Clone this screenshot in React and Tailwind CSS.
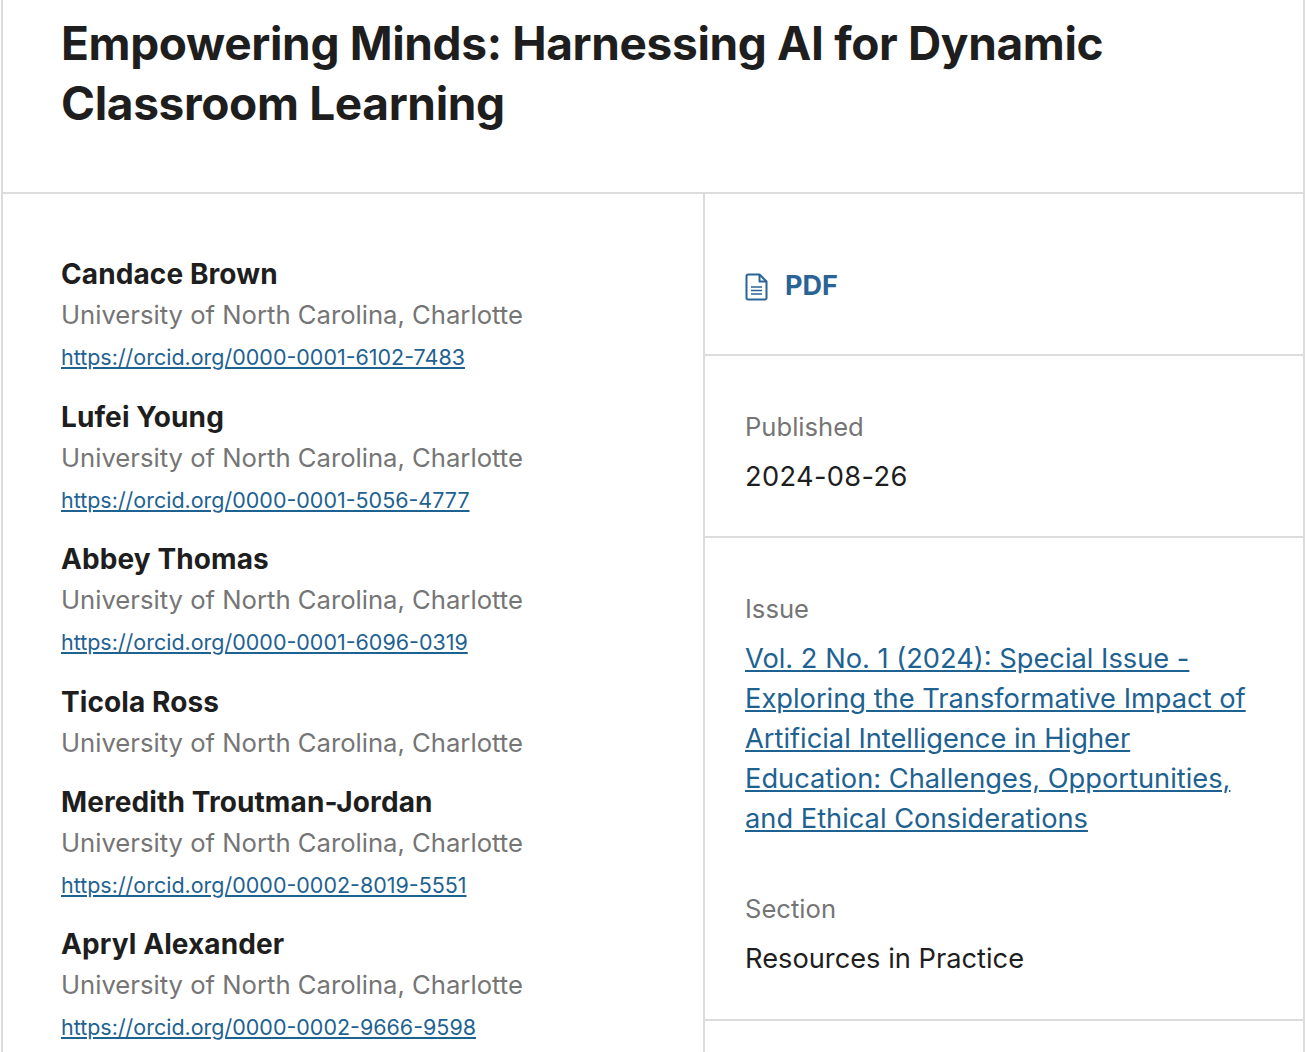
const authors = [
  { name: "Candace Brown", orcid: "https://orcid.org/0000-0001-6102-7483" },
  { name: "Lufei Young", orcid: "https://orcid.org/0000-0001-5056-4777" },
  { name: "Abbey Thomas", orcid: "https://orcid.org/0000-0001-6096-0319" },
  { name: "Ticola Ross" },
  { name: "Meredith Troutman-Jordan", orcid: "https://orcid.org/0000-0002-8019-5551" },
  { name: "Apryl Alexander", orcid: "https://orcid.org/0000-0002-9666-9598" },
];

function FileIcon() {
  return (
    <svg width="23" height="28" viewBox="0 0 23 28" fill="none" stroke="#2a6496" strokeWidth="2" strokeLinejoin="round" className="shrink-0 mt-[2px]">
      <path d="M3 1.5h11.5l7 7V25a1.5 1.5 0 0 1-1.5 1.5H3A1.5 1.5 0 0 1 1.5 25V3A1.5 1.5 0 0 1 3 1.5Z" />
      <path d="M14.5 1.5V8.5h7" />
      <path d="M6 14h11M6 17.5h11M6 21h11" strokeWidth="1.6" />
    </svg>
  );
}

export default function App() {
  return (
    <div className="h-[1052px] overflow-hidden bg-white font-['Inter',sans-serif] text-[#1e1e1e]">
      <div className="ml-[1px] mr-[1px] border-x-2 border-[#dcdcdc] h-full">
        <div className="h-[194px] border-b-2 border-[#dcdcdc] pl-[58px] pt-[13px]">
          <h1 className="text-[46px] leading-[60px] font-bold tracking-[-0.35px] w-[1150px]">
            Empowering Minds: Harnessing AI for Dynamic Classroom Learning
          </h1>
        </div>
        <div className="flex h-full">
          <div className="w-[702px] border-r-2 border-[#dcdcdc] pl-[58px] pt-[59px]">
            {authors.map((a) => (
              <div key={a.name} className="mb-[18px]">
                <div className="text-[28px] leading-[42px] font-bold tracking-[0.1px]">{a.name}</div>
                <div className="text-[25.65px] leading-[40px] text-[#757575]">University of North Carolina, Charlotte</div>
                {a.orcid && <a className="block mt-[1px] -mb-[1px] text-[21.47px] leading-[42.6px] text-[#1e6292] underline">{a.orcid}</a>}
              </div>
            ))}
          </div>
          <div className="flex-1 text-[27.25px]">
            <div className="h-[162px] border-b-2 border-[#dcdcdc] pl-[40px] pt-[77px]">
              <div className="flex items-start gap-[17px] text-[27px] leading-[30px] font-bold text-[#2a6496]">
                <FileIcon />
                <span>PDF</span>
              </div>
            </div>
            <div className="h-[182px] border-b-2 border-[#dcdcdc] pl-[40px] pt-[51px]">
              <div className="text-[25.6px] leading-[40px] text-[#757575]">Published</div>
              <div className="mt-[1px] leading-[58px] tracking-[0.33px]">2024-08-26</div>
            </div>
            <div className="h-[483px] border-b-2 border-[#dcdcdc] pl-[40px] pt-[51px]">
              <div className="text-[25.6px] leading-[40px] text-[#757575]">Issue</div>
              <a className="block mt-[10px] w-[540px] leading-[40px] text-[#1e6292] underline">
                Vol. 2 No. 1 (2024): Special Issue -<br />
                Exploring the Transformative Impact of<br />
                Artificial Intelligence in Higher<br />
                Education: Challenges, Opportunities,<br />
                and Ethical Considerations
              </a>
              <div className="mt-[50px] text-[25.6px] leading-[40px] text-[#757575]">Section</div>
              <div className="mt-[1px] leading-[58px]">Resources in Practice</div>
            </div>
          </div>
        </div>
      </div>
    </div>
  );
}
